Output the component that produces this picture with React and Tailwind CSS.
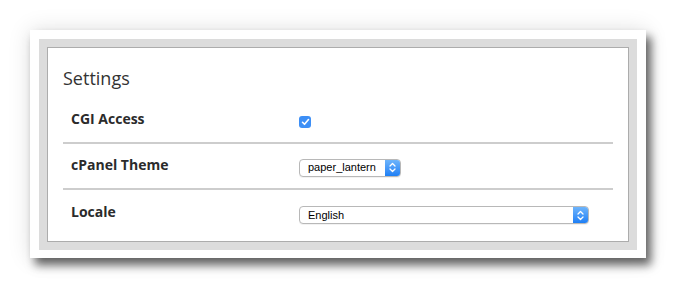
import React from 'react';

function Chevrons() {
  return (
    <svg width="7" height="11" viewBox="0 0 7 11" fill="none" stroke="white" strokeWidth="1.3" strokeLinecap="round" strokeLinejoin="round">
      <path d="M1 4 L3.5 1.5 L6 4" />
      <path d="M1 7 L3.5 9.5 L6 7" />
    </svg>
  );
}

function FakeSelect({ value, width }) {
  return (
    <div className={`${width} h-[18px] flex items-stretch rounded-[4px] border border-[#b8b8b8] bg-white overflow-hidden shadow-[0_1px_0_rgba(0,0,0,0.05)]`}>
      <div className="flex-1 flex items-center pl-[8px] text-[11px] text-black leading-none whitespace-nowrap font-['Liberation_Sans',Arial,sans-serif]">
        {value}
      </div>
      <div className="w-[15px] shrink-0 flex items-center justify-center bg-gradient-to-b from-[#6db4fb] to-[#1c7ff5]">
        <Chevrons />
      </div>
    </div>
  );
}

function Row({ label, children, last }) {
  return (
    <div className={`flex items-center h-[46px] ${last ? '' : 'border-b-2 border-[#cdcdcd]'}`}>
      <div className="w-[236px] pl-[8px] mt-[-3px] text-[14px] font-bold text-[#2b2b2b]">{label}</div>
      <div className="flex items-center">{children}</div>
    </div>
  );
}

export default function App() {
  return (
    <div className="w-[686px] h-[296px] bg-white pt-[30px] pl-[30px] font-['Open_Sans',sans-serif]">
      <div className="w-[616px] h-[228px] bg-white pt-[9px] pl-[9px] pr-[9px] shadow-[5px_7px_9px_rgba(0,0,0,0.6),0_0_22px_rgba(0,0,0,0.12)]">
        <div className="h-[211px] bg-[#dcdcdc] p-[8px]">
          <div className="h-[195px] bg-white border border-[#acacac] pt-[18px] px-[15px]">
            <h2 className="text-[18px] text-[#333] leading-[24px] mb-[8px]">Settings</h2>
            <Row label="CGI Access">
              <div className="w-[12px] h-[12px] mt-[4px] rounded-[3px] bg-[#3d8ff6] flex items-center justify-center">
                <svg width="9" height="8" viewBox="0 0 9 8" fill="none" stroke="white" strokeWidth="1.6" strokeLinecap="round" strokeLinejoin="round">
                  <path d="M1.5 4.3 L3.5 6.3 L7.5 1.5" />
                </svg>
              </div>
            </Row>
            <Row label="cPanel Theme">
              <div className="mt-[3px]">
                <FakeSelect value="paper_lantern" width="w-[102px]" />
              </div>
            </Row>
            <Row label="Locale" last>
              <div className="mt-[4px]">
                <FakeSelect value="English" width="w-[290px]" />
              </div>
            </Row>
          </div>
        </div>
      </div>
    </div>
  );
}
